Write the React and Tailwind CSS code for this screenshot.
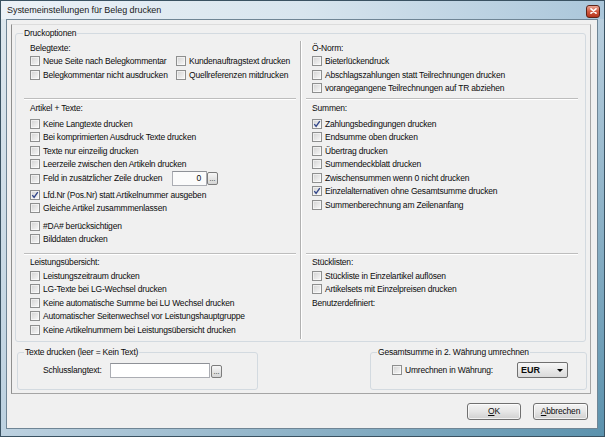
import React from "react";

function Box({ checked }) {
  return (
    <span className="w-[10px] h-[10px] shrink-0 border border-[#8e8f8f] bg-linear-to-br from-[#d2d2d2] to-[#f9f9f9] shadow-[inset_0_0_0_1px_rgba(255,255,255,0.55)] flex items-center justify-center">
      {checked && (
        <svg width="8" height="8" viewBox="0 0 8 8" className="block">
          <path d="M1.3 4.1 L3.1 6.4 L6.8 1.1" fill="none" stroke="#33478a" strokeWidth="1.4" />
        </svg>
      )}
    </span>
  );
}

function CB({ label, checked }) {
  return (
    <div className="h-[13.5px] flex items-center gap-[3px] whitespace-nowrap">
      <Box checked={checked} />
      <span>{label}</span>
    </div>
  );
}

function Sep() {
  return <div className="h-[2px] border-y border-t-[#bdbdbd] border-b-white" />;
}

function Dots() {
  return (
    <div className="w-[11px] h-[13px] border border-[#7c7c7c] rounded-[2px] bg-linear-to-b from-[#f7f7f7] to-[#d5d5d5] flex items-end justify-center pb-[2px] text-[7px] tracking-normal leading-none">
      ...
    </div>
  );
}

function Btn({ children, className }) {
  return (
    <div
      className={
        "h-[17px] border border-[#707070] rounded-[3px] bg-linear-to-b from-[#f4f4f4] via-[#e6e6e6] to-[#d0d0d0] shadow-[inset_0_0_0_1px_rgba(255,255,255,0.7)] flex items-center justify-center text-[8.5px] " +
        className
      }
    >
      {children}
    </div>
  );
}

export default function App() {
  return (
    <div className="w-[605px] h-[437px] flex flex-col border border-[#3a5262] bg-linear-to-br from-[#dfe8ee] via-[#bcd1e0] to-[#5b92ad] font-['Liberation_Sans',Arial,sans-serif] text-[8.5px] tracking-[-0.2px] leading-none text-[#0c0c0c] overflow-hidden select-none">
      {/* title bar */}
      <div className="h-[18px] shrink-0 flex items-center justify-between pl-[6px] pr-[4px] bg-linear-to-r from-[#ebf1f7] via-[#d8e5ee] to-[#aac6da]">
        <span className="text-[9px] tracking-[-0.05px] text-[#1b1b1b]">Systemeinstellungen für Beleg drucken</span>
        <div className="mt-[2px] w-[14px] h-[13px] rounded-[3px] border border-[#5e2418] bg-linear-to-b from-[#eaa594] via-[#d15a40] to-[#b5351d] flex items-center justify-center">
          <svg width="7" height="6" viewBox="0 0 7 6">
            <path d="M1 0.8L6 5.2M6 0.8L1 5.2" stroke="#fff" strokeWidth="1.6" strokeLinecap="round" />
          </svg>
        </div>
      </div>

      {/* frame */}
      <div className="flex-1 flex flex-col pl-[5px] pr-[6px] pb-[7px]">
        {/* client */}
        <div className="flex-1 flex flex-col border border-[#6f8595] bg-[#f0f0f0]">
          {/* panel */}
          <div className="mt-[4px] ml-[4px] mr-[6px] h-[370px] border border-t-[#dcdcdc] border-l-[#8f8f8f] border-r-[#a5a5a5] border-b-[#a5a5a5] flex flex-col">
            <fieldset className="mt-[2px] ml-[3px] mr-[4px] border border-[#d3dae0] rounded-[3px] p-0">
              <legend className="ml-[7px] px-[1px] h-[12px] leading-[12px]">Druckoptionen</legend>
              <div className="h-[302px] flex pl-[8px] pr-[7px]">
                {/* left column */}
                <div className="w-[272px] flex flex-col">
                  <div className="h-[59px] pt-[2px] px-[6px] flex flex-col">
                    <div className="h-[13.5px] flex items-center">Belegtexte:</div>
                    <div className="grid grid-cols-[146px_1fr]">
                      <CB label="Neue Seite nach Belegkommentar" />
                      <CB label="Kundenauftragstext drucken" />
                      <CB label="Belegkommentar nicht ausdrucken" />
                      <CB label="Quellreferenzen mitdrucken" />
                    </div>
                  </div>
                  <Sep />
                  <div className="h-[153px] px-[6px] flex flex-col">
                    <div className="mt-[1px] h-[14px] flex items-center">Artikel + Texte:</div>
                    <div className="mt-[2px] flex flex-col">
                      <CB label="Keine Langtexte drucken" />
                      <CB label="Bei komprimierten Ausdruck Texte drucken" />
                      <CB label="Texte nur einzeilig drucken" />
                      <CB label="Leerzeile zwischen den Artikeln drucken" />
                      <div className="h-[15px] flex items-center">
                        <div className="w-[142px]">
                          <CB label="Feld in zusätzlicher Zeile drucken" />
                        </div>
                        <div className="w-[35px] h-[15px] border border-[#abadb3] border-t-[#8e9197] bg-[#fbfbfb] flex items-center justify-end pr-[5px]">
                          0
                        </div>
                        <Dots />
                      </div>
                      <div className="mt-[2px]">
                        <CB label="Lfd.Nr (Pos.Nr) statt Artikelnummer ausgeben" checked />
                      </div>
                      <CB label="Gleiche Artikel zusammmenlassen" />
                      <div className="mt-[4px]">
                        <CB label="#DA# berücksichtigen" />
                      </div>
                      <CB label="Bilddaten drucken" />
                    </div>
                  </div>
                  <Sep />
                  <div className="flex-1 px-[6px] flex flex-col">
                    <div className="mt-[1px] h-[13px] flex items-center">Leistungsübersicht:</div>
                    <CB label="Leistungszeitraum drucken" />
                    <CB label="LG-Texte bei LG-Wechsel drucken" />
                    <CB label="Keine automatische Summe bei LU Wechsel drucken" />
                    <CB label="Automatischer Seitenwechsel vor Leistungshauptgruppe" />
                    <CB label="Keine Artikelnummern bei Leistungsübersicht drucken" />
                  </div>
                </div>

                {/* divider */}
                <div className="w-[2px] mx-[4px] my-[2px] border-x border-l-[#b1b1b1] border-r-white" />

                {/* right column */}
                <div className="w-[272px] flex flex-col">
                  <div className="h-[59px] pt-[2px] px-[6px] flex flex-col">
                    <div className="h-[13.5px] flex items-center">Ö-Norm:</div>
                    <CB label="Bieterlückendruck" />
                    <CB label="Abschlagszahlungen statt Teilrechnungen drucken" />
                    <CB label="vorangegangene Teilrechnungen auf TR abziehen" />
                  </div>
                  <Sep />
                  <div className="h-[153px] px-[6px] flex flex-col">
                    <div className="mt-[1px] h-[14px] flex items-center">Summen:</div>
                    <div className="mt-[2px] flex flex-col">
                      <CB label="Zahlungsbedingungen drucken" checked />
                      <CB label="Endsumme oben drucken" />
                      <CB label="Übertrag drucken" />
                      <CB label="Summendeckblatt drucken" />
                      <CB label="Zwischensummen wenn 0 nicht drucken" />
                      <CB label="Einzelalternativen ohne Gesamtsumme drucken" checked />
                      <CB label="Summenberechnung am Zeilenanfang" />
                    </div>
                  </div>
                  <Sep />
                  <div className="flex-1 px-[6px] flex flex-col">
                    <div className="mt-[1px] h-[13px] flex items-center">Stücklisten:</div>
                    <CB label="Stückliste in Einzelartikel auflösen" />
                    <CB label="Artikelsets mit Einzelpreisen drucken" />
                    <div className="h-[13.5px] flex items-center">Benutzerdefiniert:</div>
                  </div>
                </div>
              </div>
            </fieldset>

            {/* bottom group boxes */}
            <div className="mt-[4px] flex justify-between pl-[5px] pr-[3px]">
              <fieldset className="w-[241px] h-[44px] border border-[#d3dae0] rounded-[3px] p-0">
                <legend className="ml-[6px] px-[1px] h-[12px] leading-[12px]">Texte drucken (leer = Kein Text)</legend>
                <div className="pt-[5px] flex items-center h-[20px] pl-[25px]">
                  <div className="w-[67px]">Schlusslangtext:</div>
                  <div className="w-[100px] h-[15px] border border-[#abadb3] border-t-[#8e9197] bg-white" />
                  <div className="ml-[1px] mt-[2px]">
                    <Dots />
                  </div>
                </div>
              </fieldset>
              <fieldset className="w-[217px] h-[44px] border border-[#d3dae0] rounded-[3px] p-0">
                <legend className="ml-[6px] px-[1px] h-[12px] leading-[12px]">Gesamtsumme in 2. Währung umrechnen</legend>
                <div className="pt-[4px] flex items-center h-[20px] pl-[21px]">
                  <div className="w-[125px] flex items-center gap-[3px] whitespace-nowrap">
                    <Box />
                    <span>Umrechnen in Währung:</span>
                  </div>
                  <div className="w-[51px] h-[16px] border border-[#707070] rounded-[2px] bg-linear-to-b from-[#f7f7f7] to-[#dadada] flex items-center justify-between pl-[3px] pr-[4px]">
                    <span className="text-[9px] font-semibold tracking-normal">EUR</span>
                    <svg width="6" height="3" viewBox="0 0 6 3">
                      <path d="M0 0H6L3 3Z" fill="#000" />
                    </svg>
                  </div>
                </div>
              </fieldset>
            </div>
          </div>

          {/* buttons */}
          <div className="mt-[9px] flex justify-end gap-[12px] mr-[9px]">
            <Btn className="w-[54px]">
              <span className="underline">O</span>K
            </Btn>
            <Btn className="w-[55px]">
              <span className="underline">A</span>bbrechen
            </Btn>
          </div>
        </div>
      </div>
    </div>
  );
}
